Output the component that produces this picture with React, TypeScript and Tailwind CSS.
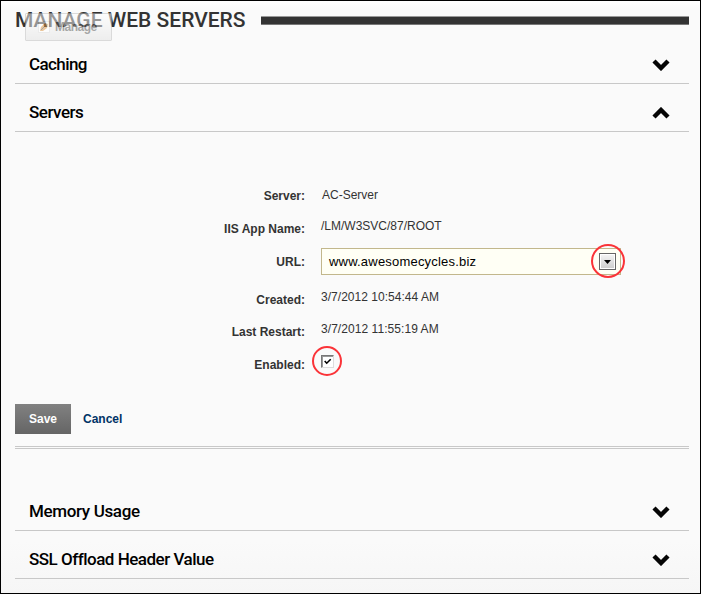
import type { ReactNode } from 'react';

function Chevron({ up = false }: { up?: boolean }) {
  return (
    <svg width="18" height="12" viewBox="0 0 18 12" className={up ? 'rotate-180' : ''}>
      <path d="M2 2 L9 9 L16 2" fill="none" stroke="#050505" strokeWidth="4.4" />
    </svg>
  );
}

function Section({ title, spacing, open = false }: { title: string; spacing: string; open?: boolean }) {
  return (
    <div className="flex h-12 items-center justify-between border-b border-[#c8c8c8] pl-[14px] pr-[19px] pt-[10px]">
      <h2 className={`whitespace-nowrap pb-[2px] font-['Roboto',sans-serif] text-[17px] leading-6 font-medium text-black ${spacing}`}>{title}</h2>
      <Chevron up={open} />
    </div>
  );
}

function Row({ label, height, children }: { label: string; height: string; children: ReactNode }) {
  return (
    <div className={`flex items-center ${height}`}>
      <div className="w-[290px] text-right font-bold text-[#333]">{label}</div>
      <div className="ml-4 flex">{children}</div>
    </div>
  );
}

export default function App() {
  return (
    <div className="h-[594px] w-[701px] overflow-hidden border border-black bg-[linear-gradient(to_bottom,#ffffff_0px,#fafafa_8px,#fafafa_540px,#f6f6f6_592px)] pl-[14px] pr-[11px] font-['Liberation_Sans',Arial,sans-serif] text-[12px] leading-4 text-[#333]">
      <header className="relative flex h-[35px] items-center">
        <h1 className="w-[246px] whitespace-nowrap pt-[2px] font-['Roboto',sans-serif] text-[21px] leading-7 font-medium text-[#333]">MANAGE WEB SERVERS</h1>
        <div className="mt-[4px] h-[9px] flex-1 border-y border-t-[#999] border-b-[#777] bg-[#333]" />
        <div className="absolute left-[10px] top-[12px] flex h-7 w-[87px] items-center rounded-[1px] border border-[#bbb] bg-linear-to-b from-white to-[#e2e2e2] pl-3 text-[12px] text-[#555] opacity-50">
          <svg width="12" height="12" viewBox="0 0 12 12" className="mr-[5px]">
            <rect x=".5" y=".5" width="11" height="11" fill="#fff" stroke="#ddd" />
            <path d="M2 10 3 6 7 2 10 3 9 7 5 10Z" fill="#dc9440" />
            <path d="M3 9 7 5" stroke="#555" />
          </svg>
          <span className="font-bold tracking-[-0.5px]">Manage</span>
        </div>
      </header>
      <Section title="Caching" spacing="tracking-[-0.6px]" />
      <Section title="Servers" spacing="tracking-[-0.5px]" open />
      <div className="h-[272px] pt-12">
        <Row label="Server:" height="h-8"><span className="pb-[2px] pl-px">AC-Server</span></Row>
        <Row label="IIS App Name:" height="h-[33px]"><span className="pb-[6px]">/LM/W3SVC/87/ROOT</span></Row>
        <div className="h-px" />
        <Row label="URL:" height="h-[31px]">
          <div className="flex h-[27px] w-[300px] items-center justify-between border border-[#c2b78c] bg-[#fffff5] pl-[7px] pr-1 text-[13px] text-black">
            <span className="tracking-[0.2px]">www.awesomecycles.biz</span>
            <button className="relative flex h-[17px] w-[17px] items-center justify-center border border-[#666] bg-white p-px">
              <span className="flex h-full w-full items-center justify-center bg-linear-to-b from-[#f3f3f3] to-[#cfcfcf]">
                <svg width="7" height="4" viewBox="0 0 7 4"><path d="M0 0H7L3.5 4Z" fill="#000" /></svg>
              </span>
              <span className="absolute -left-[9px] -top-[10px] h-[34px] w-[34px] rounded-full border-2 border-[#fa3338]" />
            </button>
          </div>
        </Row>
        <div className="h-[7px]" />
        <Row label="Created:" height="h-8"><span className="pb-[6px] tracking-[0.03px]">3/7/2012 10:54:44 AM</span></Row>
        <Row label="Last Restart:" height="h-8"><span className="pb-[6px] tracking-[0.06px]">3/7/2012 11:55:19 AM</span></Row>
        <Row label="Enabled:" height="h-[34px]">
          <div className="relative mb-[8px] h-[13px] w-[13px] border border-b-[#ddd] border-l-[#777] border-r-[#ddd] border-t-[#777] bg-white shadow-[inset_1px_1px_0_#999]">
            <svg width="11" height="11" viewBox="0 0 11 11"><path d="M2.7 5 4.7 7.2 8.7 3.2" fill="none" stroke="#000" strokeWidth="1.6" /></svg>
            <span className="absolute -left-[10px] -top-[10px] h-[30px] w-[30px] rounded-full border-2 border-[#fa3338]" />
          </div>
        </Row>
      </div>
      <div className="flex h-[30px] items-center gap-3 font-bold">
        <button className="h-[30px] w-14 bg-linear-to-b from-[#818181] to-[#656565] text-white">Save</button>
        <a className="text-[#003366]">Cancel</a>
      </div>
      <div className="mt-3 mb-[34px] h-[3px] border-y border-[#c8c8c8]" />
      <Section title="Memory Usage" spacing="tracking-[-0.35px]" />
      <Section title="SSL Offload Header Value" spacing="tracking-[-0.5px]" />
    </div>
  );
}
